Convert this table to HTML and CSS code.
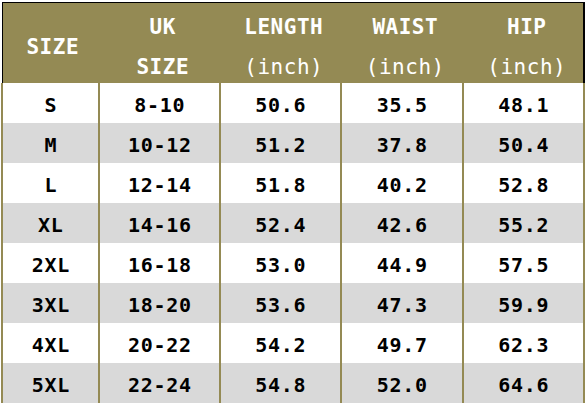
FILE: index.html
```html
<!DOCTYPE html>
<html>
<head>
<meta charset="utf-8">
<link rel="stylesheet" href="styles.css">
</head>
<body>
<div class="chart">
  <div class="head">
    <div class="hcell"><span class="one">SIZE</span></div>
    <div class="hcell"><span class="l1">UK</span><span class="l2 strong">SIZE</span></div>
    <div class="hcell"><span class="l1">LENGTH</span><span class="l2">(inch)</span></div>
    <div class="hcell"><span class="l1">WAIST</span><span class="l2">(inch)</span></div>
    <div class="hcell"><span class="l1">HIP</span><span class="l2">(inch)</span></div>
  </div>
  <div class="row"><div class="cell">S</div><div class="cell">8-10</div><div class="cell">50.6</div><div class="cell">35.5</div><div class="cell">48.1</div></div>
  <div class="row alt"><div class="cell">M</div><div class="cell">10-12</div><div class="cell">51.2</div><div class="cell">37.8</div><div class="cell">50.4</div></div>
  <div class="row"><div class="cell">L</div><div class="cell">12-14</div><div class="cell">51.8</div><div class="cell">40.2</div><div class="cell">52.8</div></div>
  <div class="row alt"><div class="cell">XL</div><div class="cell">14-16</div><div class="cell">52.4</div><div class="cell">42.6</div><div class="cell">55.2</div></div>
  <div class="row"><div class="cell">2XL</div><div class="cell">16-18</div><div class="cell">53.0</div><div class="cell">44.9</div><div class="cell">57.5</div></div>
  <div class="row alt"><div class="cell">3XL</div><div class="cell">18-20</div><div class="cell">53.6</div><div class="cell">47.3</div><div class="cell">59.9</div></div>
  <div class="row"><div class="cell">4XL</div><div class="cell">20-22</div><div class="cell">54.2</div><div class="cell">49.7</div><div class="cell">62.3</div></div>
  <div class="row alt"><div class="cell">5XL</div><div class="cell">22-24</div><div class="cell">54.8</div><div class="cell">52.0</div><div class="cell">64.6</div></div>
</div>
</body>
</html>
```
FILE: styles.css
```css
html, body {
  margin: 0;
  padding: 0;
  background: #ffffff;
}
.chart {
  margin: 2px 0 0 1px;
  width: 584px;
  font-family: "DejaVu Sans Mono", "Liberation Mono", monospace;
  font-weight: bold;
}
.head {
  display: grid;
  grid-template-columns: 99px 121px 121px 122px 121px;
  height: 81px;
  box-sizing: border-box;
  background: #948a54;
  border-top: 1px solid #000;
  border-left: 1px solid #000;
  border-right: 2px solid #000;
  margin-left: 1px;
  width: 583px;
  color: #ffffff;
  font-size: 21px;
  letter-spacing: 0.5px;
}
.hcell {
  display: flex;
  flex-direction: column;
  align-items: center;
  justify-content: center;
  padding-top: 4px;
}
.hcell span {
  display: block;
  height: 40px;
  line-height: 40px;
  padding-left: 0.5px;
}
.hcell .one {
  height: auto;
}
.hcell .l2 {
  font-weight: normal;
}
.hcell .l2.strong {
  font-weight: bold;
}
.row {
  display: grid;
  grid-template-columns: 99px 121px 121px 122px 121px;
  height: 40px;
  background: #ffffff;
}
.row.alt {
  background: #d9d9d9;
}
.cell {
  display: flex;
  align-items: center;
  justify-content: center;
  border-right: 2px solid #948a54;
  font-size: 20px;
  letter-spacing: 0.7px;
  padding-left: 0.7px;
  padding-top: 3px;
  color: #000;
}
.cell:first-child {
  border-left: 2px solid #948a54;
}
```
